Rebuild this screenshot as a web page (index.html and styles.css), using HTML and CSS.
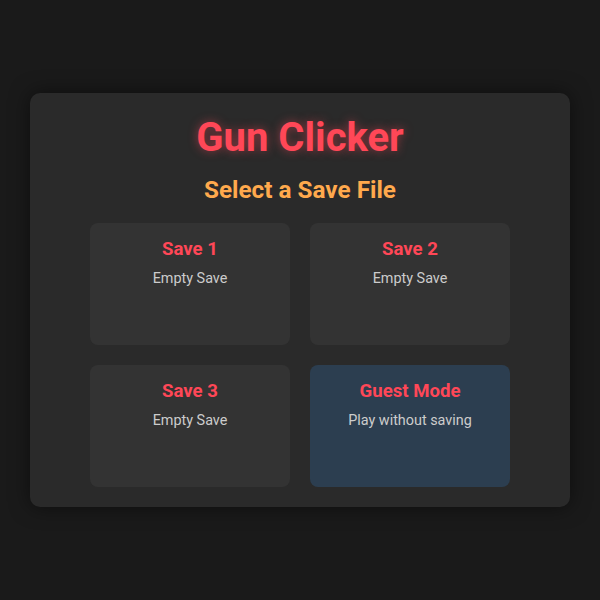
FILE: index.html
```html
<!DOCTYPE html>
<html>
<head>
<meta charset="utf-8">
<link rel="stylesheet" href="styles.css">
</head>
<body>
<div class="panel">
  <h1 class="title">Gun Clicker</h1>
  <h2 class="subtitle">Select a Save File</h2>
  <div class="grid">
    <div class="card">
      <div class="card-title">Save 1</div>
      <div class="card-text">Empty Save</div>
    </div>
    <div class="card">
      <div class="card-title">Save 2</div>
      <div class="card-text">Empty Save</div>
    </div>
    <div class="card">
      <div class="card-title">Save 3</div>
      <div class="card-text">Empty Save</div>
    </div>
    <div class="card guest">
      <div class="card-title">Guest Mode</div>
      <div class="card-text">Play without saving</div>
    </div>
  </div>
</div>
</body>
</html>
```
FILE: styles.css
```css
html, body {
  margin: 0;
  padding: 0;
}
body {
  background: #1a1a1a;
  font-family: Roboto, "Liberation Sans", sans-serif;
  height: 600px;
  display: flex;
  align-items: center;
  justify-content: center;
}
.panel {
  width: 540px;
  height: 414px;
  box-sizing: border-box;
  background: #2a2a2a;
  border-radius: 10px;
  box-shadow: 0 0 20px rgba(0, 0, 0, 0.5);
  padding-top: 21px;
  display: flex;
  flex-direction: column;
  align-items: center;
}
.title {
  margin: 0;
  font-size: 40px;
  font-weight: 700;
  color: #ff4757;
  text-shadow: 0 0 10px rgba(255, 71, 87, 0.5);
}
.subtitle {
  margin: 14px 0 0;
  font-size: 24.3px;
  font-weight: 700;
  color: #ffa94d;
}
.grid {
  margin-top: 19px;
  display: grid;
  grid-template-columns: 200px 200px;
  grid-auto-rows: 122px;
  gap: 20px;
}
.card {
  background: #333333;
  border-radius: 8px;
  padding-top: 15px;
  box-sizing: border-box;
  text-align: center;
}
.card.guest {
  background: #2c3e50;
}
.card-title {
  font-size: 18.6px;
  font-weight: 700;
  color: #ff4757;
}
.card-text {
  margin-top: 10px;
  font-size: 14.4px;
  color: #cccccc;
}
```
